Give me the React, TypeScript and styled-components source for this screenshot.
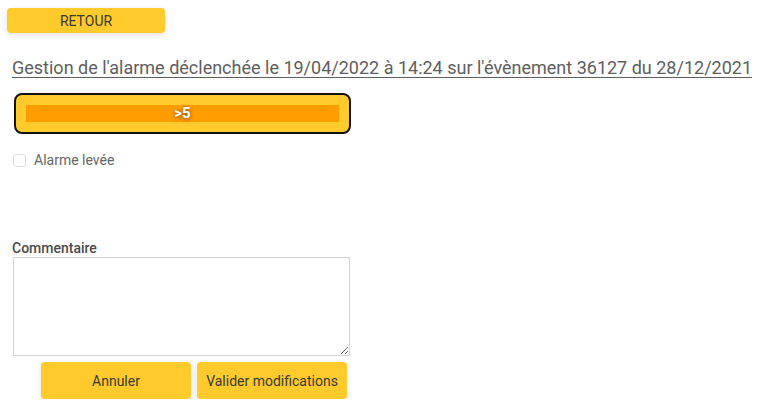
import React from "react";
import styled, { createGlobalStyle } from "styled-components";

const GlobalStyle = createGlobalStyle`
  body {
    margin: 0;
    background: #ffffff;
    font-family: Roboto, "Liberation Sans", sans-serif;
  }
`;

const Page = styled.div`
  display: flex;
  flex-direction: column;
  align-items: flex-start;
  padding: 8px 0 0 7px;
`;

const YellowButton = styled.button<{ wd?: string; ht?: string }>`
  width: ${(props) => props.wd || "158px"};
  height: ${(props) => props.ht || "25px"};
  background-color: #ffca2c;
  border: none;
  border-radius: 4px;
  box-shadow: 0 2px 6px rgba(0, 0, 0, 0.12);
  font-family: Roboto, "Liberation Sans", sans-serif;
  font-size: 14px;
  color: #3a3a2a;
  padding: 0;
  cursor: pointer;
`;

const Title = styled.h1`
  margin: 24px 0 0 5px;
  font-size: 18px;
  font-weight: 400;
  line-height: 22px;
  color: #5e5e5e;
  text-decoration: underline;
  text-underline-offset: 3px;
  white-space: nowrap;
`;

const AlarmBox = styled.div`
  box-sizing: border-box;
  margin: 14px 0 0 7px;
  width: 337px;
  height: 41px;
  border: 2px solid #111111;
  border-radius: 8px;
  background-color: #ffca2c;
  padding: 10px 10px;
`;

const AlarmBar = styled.div`
  height: 17px;
  background-color: #ff9d00;
  color: #ffffff;
  font-weight: 700;
  font-size: 15px;
  line-height: 17px;
  text-align: center;
  text-shadow: 0 1px 4px rgba(90, 50, 0, 0.9);
`;

const CheckRow = styled.label`
  display: flex;
  align-items: center;
  gap: 8px;
  margin: 18px 0 0 6px;
  font-size: 14px;
  color: #666666;
`;

const Check = styled.span`
  box-sizing: border-box;
  width: 13px;
  height: 13px;
  border: 1px solid #dddddd;
  border-radius: 3px;
  background: #ffffff;
`;

const Field = styled.div`
  display: flex;
  flex-direction: column;
  margin: 72px 0 0 5px;
`;

const Label = styled.span`
  font-size: 14px;
  font-weight: 500;
  color: #4a4a4a;
  line-height: 17px;
`;

const Area = styled.textarea`
  box-sizing: border-box;
  margin: 0 0 0 1px;
  width: 337px;
  height: 99px;
  border: 1px solid #d4d4d4;
  border-radius: 0;
  font-family: Roboto, "Liberation Sans", sans-serif;
`;

const Actions = styled.div`
  display: flex;
  gap: 6px;
  margin: 6px 0 0 34px;
`;

export default function App() {
  return (
    <>
      <GlobalStyle />
      <Page>
        <YellowButton>RETOUR</YellowButton>
        <Title>
          Gestion de l'alarme déclenchée le 19/04/2022 à 14:24 sur l'évènement
          36127 du 28/12/2021
        </Title>
        <AlarmBox>
          <AlarmBar>&gt;5</AlarmBar>
        </AlarmBox>
        <CheckRow>
          <Check />
          Alarme levée
        </CheckRow>
        <Field>
          <Label>Commentaire</Label>
          <Area />
        </Field>
        <Actions>
          <YellowButton wd="150px" ht="37px">
            Annuler
          </YellowButton>
          <YellowButton wd="150px" ht="37px">
            Valider modifications
          </YellowButton>
        </Actions>
      </Page>
    </>
  );
}
